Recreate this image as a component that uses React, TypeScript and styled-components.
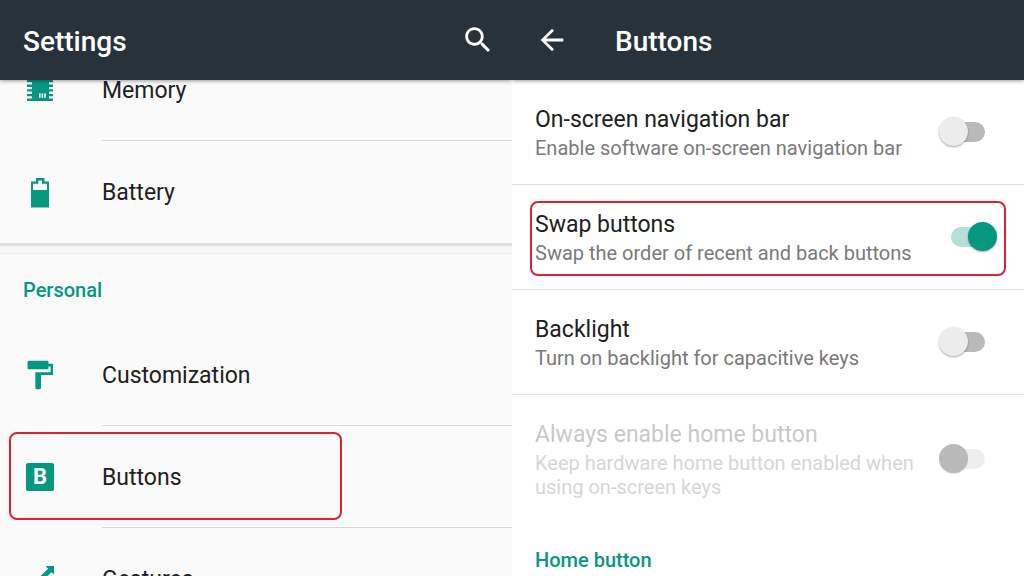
import React, { useState } from "react";
import styled, { createGlobalStyle, css } from "styled-components";

const TEAL = "#069781";
const BAR = "#28323a";

const GlobalStyle = createGlobalStyle`
  *, *::before, *::after { box-sizing: border-box; }
  html, body { margin: 0; height: 100%; overflow: hidden; }
  body { font-family: Roboto, "Noto Sans", sans-serif; color: #212121; background: #fff; }
  #root { height: 100%; }
  h1, h2, p { margin: 0; }
`;

const Screens = styled.div`
  display: grid;
  grid-template-columns: 1fr 1fr;
  height: 100%;
`;

const Screen = styled.main<{ $shade?: boolean }>`
  display: flex;
  flex-direction: column;
  min-width: 0;
  overflow: hidden;
  background: ${(p) => (p.$shade ? "#fafafa" : "#fff")};
`;

const AppBar = styled.header`
  position: relative;
  z-index: 1;
  flex: none;
  display: flex;
  align-items: center;
  height: 80px;
  padding: 4px 17px 0 23px;
  background: ${BAR};
  color: #fff;
  box-shadow: 0 1px 4px rgba(0, 0, 0, 0.4);
`;

const BarTitle = styled.h1<{ $inset?: boolean }>`
  flex: 1;
  padding-left: ${(p) => (p.$inset ? 46 : 0)}px;
  font-size: 28px;
  line-height: 36px;
  font-weight: 500;
`;

const IconButton = styled.button`
  display: flex;
  width: 34px;
  height: 34px;
  margin-bottom: 4px;
  padding: 0;
  border: 0;
  background: none;
  color: inherit;
`;

const Icon = styled.svg`
  flex: none;
  width: 34px;
  height: 34px;
  fill: currentColor;
`;

/* The list is partly scrolled, so its first row slides under the app bar. */
const ScrolledNav = styled.nav`
  flex: 1;
  min-height: 0;
  margin-top: -41px;
`;

const NavRow = styled.a`
  position: relative;
  display: flex;
  align-items: center;
  gap: 45px;
  height: 102px;
  padding-left: 23px;
  color: ${TEAL};
  text-decoration: none;
`;

const NavLabel = styled.span<{ $last?: boolean }>`
  flex: 1;
  display: flex;
  align-items: center;
  height: 100%;
  padding-top: 3px;
  border-bottom: 1px solid ${(p) => (p.$last ? "transparent" : "#d9d9db")};
  color: #212121;
  font-size: 23px;
  line-height: 30px;
`;

const LetterSlot = styled.span`
  flex: none;
  display: flex;
  justify-content: center;
  width: 34px;
`;

const LetterTile = styled.span`
  width: 28px;
  height: 28px;
  border-radius: 2px;
  background: ${TEAL};
  color: #fff;
  font-size: 22px;
  line-height: 28px;
  font-weight: 700;
  text-align: center;
`;

const SectionGap = styled.div`
  height: 11px;
  border-bottom: 1px solid #ececec;
  background: linear-gradient(#e0e0e0 0, #dcdcdc 2px, #f8f8f8 4px);
`;

const SectionTitle = styled.h2`
  flex: none;
  display: flex;
  align-items: center;
  height: 70px;
  padding: 2px 23px 0;
  color: ${TEAL};
  font-size: 20px;
  line-height: 24px;
  font-weight: 500;
`;

const markBox = css`
  position: absolute;
  border: 2px solid #dc2430;
  border-radius: 8px;
  pointer-events: none;
`;

const NavMark = styled.span`
  ${markBox}
  inset: 6px auto 8px 9px;
  width: 65%;
`;

const SettingMark = styled.span`
  ${markBox}
  inset: 16px 18px 13px 18px;
`;

const SettingRow = styled.label<{ $disabled?: boolean }>`
  position: relative;
  flex: none;
  display: flex;
  align-items: center;
  justify-content: space-between;
  gap: 16px;
  min-height: 105px;
  padding: 24px 27px 24px 23px;
  border-bottom: 1px solid ${(p) => (p.$disabled ? "transparent" : "#dfdfdf")};
  color: ${(p) => (p.$disabled ? "#c9c9c9" : "#212121")};
`;

const SettingText = styled.span`
  display: flex;
  flex-direction: column;
`;

const SettingTitle = styled.span`
  font-size: 23px;
  line-height: 32px;
`;

const Summary = styled.span<{ $disabled?: boolean }>`
  color: ${(p) => (p.$disabled ? "#d6d6d6" : "#7a7a7a")};
  font-size: 20px;
  line-height: 24px;
`;

const Switch = styled.input`
  appearance: none;
  position: relative;
  flex: none;
  width: 58px;
  height: 30px;
  margin: 0;

  &::before {
    content: "";
    position: absolute;
    inset: 5px 12px;
    border-radius: 10px;
    background: #b9b9b9;
  }
  &::after {
    content: "";
    position: absolute;
    top: 0;
    left: 0;
    width: 29px;
    height: 29px;
    border-radius: 50%;
    background: #ececec;
    box-shadow: 0 1px 2px rgba(0, 0, 0, 0.35);
  }
  &:checked::before { background: #b4e0d9; }
  &:checked::after { left: 29px; background: ${TEAL}; }
  &:disabled::before { background: #eeeeee; }
  &:disabled::after { background: #b9b9b9; box-shadow: 0 1px 1px rgba(0, 0, 0, 0.12); }
`;

const MemoryIcon = () => (
  <Icon viewBox="0 0 34 34" aria-hidden="true">
    <path
      fillRule="evenodd"
      d="M9 0H26V2H30V4.5H26V7H30V9.2H26V11.6H30V13.9H26V16.2H30V18.5H26V21H30V23.2H26V25.6H30V28H4V25.6H9V23.2H4V21H9V18.5H4V16.2H9V13.9H4V11.6H9V9.2H4V7H9V4.5H4V2H9ZM16 20.5V24.8H17.6V20.5ZM18.6 20.5V24.8H20.2V20.5ZM21.2 20.5V24.8H22.8V20.5Z"
    />
  </Icon>
);

const BatteryIcon = () => (
  <Icon viewBox="0 0 34 34" aria-hidden="true">
    <path
      fillRule="evenodd"
      d="M8 6.5H13V3H21.5V6.5H26V32.5H8ZM10 8.8V15H24V8.8H19V5.5H15.3V8.8Z"
    />
  </Icon>
);

const RollerIcon = () => (
  <Icon viewBox="0 0 24 24" aria-hidden="true">
    <path d="M18 4V3c0-.55-.45-1-1-1H4.200c-.55 0-1 .45-1 1v4c0 .55.45 1 1 1H17c.55 0 1-.45 1-1V6h1.500v4H8.700v11c0 .55.45 1 1 1h2c.55 0 1-.45 1-1v-9H21.200V4h-3z" />
  </Icon>
);

const GestureIcon = () => (
  <Icon viewBox="0 0 34 34" aria-hidden="true">
    <path d="M22.500 4H31V12.500L28.300 10.200 13 25.500 9.500 22 25 6.700Z" />
  </Icon>
);

const SearchIcon = () => (
  <Icon viewBox="0 0 24 24" aria-hidden="true">
    <path d="M15.5 14h-.79l-.28-.27C15.41 12.59 16 11.11 16 9.500 16 5.910 13.090 3 9.500 3S3 5.910 3 9.500 5.910 16 9.500 16c1.610 0 3.090-.59 4.230-1.570l.27.28v.79l5 4.990L20.490 19l-4.990-5zm-6 0C7.010 14 5 11.990 5 9.500S7.010 5 9.500 5 14 7.010 14 9.500 11.990 14 9.500 14z" />
  </Icon>
);

const BackIcon = () => (
  <Icon viewBox="0 0 24 24" aria-hidden="true">
    <path d="M20 11H7.830l5.590-5.590L12 4l-8 8 8 8 1.410-1.410L7.830 13H20v-2z" />
  </Icon>
);

type Setting = {
  title: string;
  summary: string;
  on?: boolean;
  disabled?: boolean;
  marked?: boolean;
};

const SETTINGS: Setting[] = [
  { title: "On-screen navigation bar", summary: "Enable software on-screen navigation bar" },
  {
    title: "Swap buttons",
    summary: "Swap the order of recent and back buttons",
    on: true,
    marked: true,
  },
  { title: "Backlight", summary: "Turn on backlight for capacitive keys" },
  {
    title: "Always enable home button",
    summary: "Keep hardware home button enabled when using on-screen keys",
    disabled: true,
  },
];

function SettingItem({ title, summary, on = false, disabled, marked }: Setting) {
  const [checked, setChecked] = useState(on);
  return (
    <SettingRow $disabled={disabled}>
      <SettingText>
        <SettingTitle>{title}</SettingTitle>
        <Summary $disabled={disabled}>{summary}</Summary>
      </SettingText>
      <Switch
        type="checkbox"
        role="switch"
        checked={checked}
        disabled={disabled}
        onChange={(e) => setChecked(e.target.checked)}
      />
      {marked && <SettingMark />}
    </SettingRow>
  );
}

export default function App() {
  return (
    <>
      <GlobalStyle />
      <Screens>
        <Screen $shade>
          <AppBar>
            <BarTitle>Settings</BarTitle>
            <IconButton type="button" aria-label="Search">
              <SearchIcon />
            </IconButton>
          </AppBar>
          <ScrolledNav>
            <NavRow href="#memory">
              <MemoryIcon />
              <NavLabel>Memory</NavLabel>
            </NavRow>
            <NavRow href="#battery">
              <BatteryIcon />
              <NavLabel $last>Battery</NavLabel>
            </NavRow>
            <SectionGap />
            <SectionTitle>Personal</SectionTitle>
            <NavRow href="#customization">
              <RollerIcon />
              <NavLabel>Customization</NavLabel>
            </NavRow>
            <NavRow href="#buttons">
              <LetterSlot>
                <LetterTile aria-hidden="true">B</LetterTile>
              </LetterSlot>
              <NavLabel>Buttons</NavLabel>
              <NavMark />
            </NavRow>
            <NavRow href="#gestures">
              <GestureIcon />
              <NavLabel>Gestures</NavLabel>
            </NavRow>
          </ScrolledNav>
        </Screen>
        <Screen>
          <AppBar>
            <IconButton type="button" aria-label="Back">
              <BackIcon />
            </IconButton>
            <BarTitle $inset>Buttons</BarTitle>
          </AppBar>
          {SETTINGS.map((s) => (
            <SettingItem key={s.title} {...s} />
          ))}
          <SectionTitle>Home button</SectionTitle>
        </Screen>
      </Screens>
    </>
  );
}
